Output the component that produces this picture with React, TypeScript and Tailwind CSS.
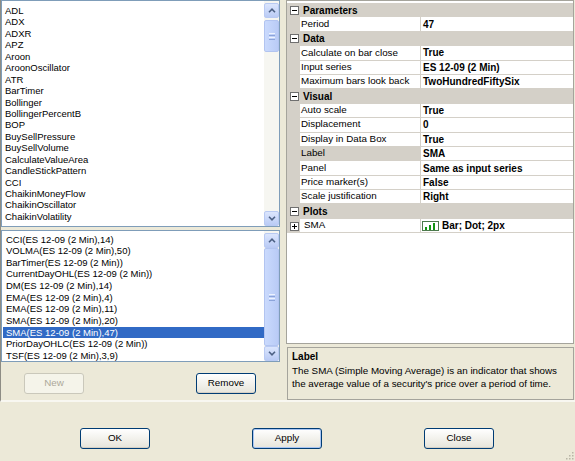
import React from "react";

/**
 * Indicators dialog (XP-style). Left: available + applied indicator lists.
 * Right: property grid with description panel. Bottom: OK / Apply / Close.
 */

const available = [
  "ADL",
  "ADX",
  "ADXR",
  "APZ",
  "Aroon",
  "AroonOscillator",
  "ATR",
  "BarTimer",
  "Bollinger",
  "BollingerPercentB",
  "BOP",
  "BuySellPressure",
  "BuySellVolume",
  "CalculateValueArea",
  "CandleStickPattern",
  "CCI",
  "ChaikinMoneyFlow",
  "ChaikinOscillator",
  "ChaikinVolatility",
];

const applied = [
  "CCI(ES 12-09 (2 Min),14)",
  "VOLMA(ES 12-09 (2 Min),50)",
  "BarTimer(ES 12-09 (2 Min))",
  "CurrentDayOHL(ES 12-09 (2 Min))",
  "DM(ES 12-09 (2 Min),14)",
  "EMA(ES 12-09 (2 Min),4)",
  "EMA(ES 12-09 (2 Min),11)",
  "SMA(ES 12-09 (2 Min),20)",
  "SMA(ES 12-09 (2 Min),47)",
  "PriorDayOHLC(ES 12-09 (2 Min))",
  "TSF(ES 12-09 (2 Min),3,9)",
];

type Row =
  | { kind: "cat"; label: string }
  | { kind: "prop"; name: string; value: string; selected?: boolean };

const rows: Row[] = [
  { kind: "cat", label: "Parameters" },
  { kind: "prop", name: "Period", value: "47" },
  { kind: "cat", label: "Data" },
  { kind: "prop", name: "Calculate on bar close", value: "True" },
  { kind: "prop", name: "Input series", value: "ES 12-09 (2 Min)" },
  { kind: "prop", name: "Maximum bars look back", value: "TwoHundredFiftySix" },
  { kind: "cat", label: "Visual" },
  { kind: "prop", name: "Auto scale", value: "True" },
  { kind: "prop", name: "Displacement", value: "0" },
  { kind: "prop", name: "Display in Data Box", value: "True" },
  { kind: "prop", name: "Label", value: "SMA", selected: true },
  { kind: "prop", name: "Panel", value: "Same as input series" },
  { kind: "prop", name: "Price marker(s)", value: "False" },
  { kind: "prop", name: "Scale justification", value: "Right" },
  { kind: "cat", label: "Plots" },
];

function Arrow({ up }: { up?: boolean }) {
  return (
    <svg width="8" height="5" viewBox="0 0 8 5">
      <path
        d={up ? "M1 4.2 L4 1.2 L7 4.2" : "M1 0.8 L4 3.8 L7 0.8"}
        fill="none"
        stroke="#4D6185"
        strokeWidth="1.6"
      />
    </svg>
  );
}

function ScrollButton({ up }: { up?: boolean }) {
  return (
    <div className="flex h-[15px] w-[15px] shrink-0 items-center justify-center rounded-[2px] border border-[#B9CAF3] bg-linear-to-b from-[#DCE6FD] to-[#BACBF5]">
      <Arrow up={up} />
    </div>
  );
}

function Thumb({ className }: { className: string }) {
  return (
    <div
      className={`flex w-[15px] flex-col items-center justify-center gap-[1px] rounded-[2px] border border-[#B2C4F0] bg-linear-to-r from-[#CADAFD] to-[#B9CBF6] ${className}`}
    >
      <div className="h-[1px] w-[6px] bg-[#EEF3FE]" />
      <div className="h-[1px] w-[6px] bg-[#8CA4DA]" />
      <div className="h-[1px] w-[6px] bg-[#EEF3FE]" />
      <div className="h-[1px] w-[6px] bg-[#8CA4DA]" />
    </div>
  );
}

function Box({ plus }: { plus?: boolean }) {
  return (
    <svg width="9" height="9" viewBox="0 0 9 9">
      <rect x="0.5" y="0.5" width="8" height="8" fill="white" stroke="#6F6F6F" />
      <path d="M2 4.5 H7" stroke="black" />
      {plus && <path d="M4.5 2 V7" stroke="black" />}
    </svg>
  );
}

function PlotIcon() {
  return (
    <svg width="17" height="10" viewBox="0 0 17 10">
      <rect x="0.5" y="0.5" width="16" height="9" fill="white" stroke="#4C7A4C" />
      <rect x="3" y="6" width="2" height="3" fill="#129412" />
      <rect x="7" y="4" width="2" height="5" fill="#129412" />
      <rect x="11" y="2" width="2" height="7" fill="#129412" />
    </svg>
  );
}

function XpButton({
  label,
  w,
  disabled,
  focused,
}: {
  label: string;
  w: string;
  disabled?: boolean;
  focused?: boolean;
}) {
  if (disabled) {
    return (
      <div
        className={`flex h-[21px] ${w} items-center justify-center rounded-[3px] border border-[#CAC8BB] bg-[#F5F4EA] text-[9.8px] text-[#ACA899]`}
      >
        {label}
      </div>
    );
  }
  return (
    <div
      className={`flex h-[21px] ${w} items-center justify-center rounded-[3px] border border-[#003C74] bg-linear-to-b from-white to-[#E6E4DA] text-[9.8px] ${
        focused ? "shadow-[inset_0_0_0_1px_#A9C5F2]" : "shadow-[inset_0_-1px_0_#D6D0C5]"
      }`}
    >
      {label}
    </div>
  );
}

export default function App() {
  return (
    <div className="flex h-[461px] w-[575px] flex-col overflow-hidden bg-[#ECE9D8] font-['Liberation_Sans',Arial,sans-serif] text-black">
      {/* Upper split area */}
      <div className="flex h-[402px] border-b-2 border-l border-b-[#F8F7F1] border-l-[#8D8C84]">
        {/* Left column */}
        <div className="flex w-[279px] flex-col">
          {/* Available indicators */}
          <div className="flex h-[227px] border border-[#7F9DB9] bg-white">
            <div className="flex-1 pl-[3px] pt-[4px] text-[9.5px]">
              {available.map((name) => (
                <div key={name} className="h-[11.45px] leading-[11.45px]">
                  {name}
                </div>
              ))}
            </div>
            <div className="flex w-[15px] flex-col bg-[#F6F6F1] pt-[2px]">
              <ScrollButton up />
              <Thumb className="mt-[2px] h-[32px]" />
              <div className="flex-1" />
              <ScrollButton />
            </div>
          </div>

          {/* Applied indicators */}
          <div className="mt-[3px] flex h-[132px] border border-[#7F9DB9] bg-white">
            <div className="flex-1 pl-[1px] pt-[2.5px] text-[9.5px]">
              {applied.map((name, i) => (
                <div
                  key={name}
                  className={
                    i === 8
                      ? "h-[11.65px] bg-[#316AC5] pl-[3px] leading-[11.65px] text-white"
                      : "h-[11.65px] pl-[3px] leading-[11.65px]"
                  }
                >
                  {name}
                </div>
              ))}
            </div>
            <div className="flex w-[15px] flex-col bg-[#F6F6F1] pt-[2px]">
              <ScrollButton up />
              <Thumb className="flex-1" />
              <ScrollButton />
            </div>
          </div>

          <div className="mt-[11px] flex gap-[112px] pl-[23px]">
            <XpButton label="New" w="w-[60px]" disabled />
            <XpButton label="Remove" w="w-[60px]" />
          </div>
        </div>

        {/* Splitter */}
        <div className="w-[6px]" />

        {/* Right column */}
        <div className="flex flex-1 flex-col pr-[1px]">
          <div className="h-[344px] border border-[#A5A49C] bg-white pt-[2px]">
            {rows.map((r) =>
              r.kind === "cat" ? (
                <div key={r.label} className="flex h-[14.4px] items-center bg-[#D4D0C8]">
                  <div className="flex w-[14px] justify-center">
                    <Box />
                  </div>
                  <span className="pl-[2px] text-[10px] font-bold">{r.label}</span>
                </div>
              ) : (
                <div key={r.name} className="flex h-[14.4px]">
                  <div className="w-[13px] bg-[#D4D0C8]" />
                  <div
                    className={
                      r.selected
                        ? "flex w-[121px] items-center border-r border-b border-[#D4D0C8] bg-[#D4D0C8] pl-[1px] text-[9.8px]"
                        : "flex w-[121px] items-center border-r border-b border-[#D4D0C8] pl-[1px] text-[9.8px]"
                    }
                  >
                    {r.name}
                  </div>
                  <div className="flex flex-1 items-center border-b border-[#D4D0C8] pl-[2px] text-[10px] font-bold">
                    {r.value}
                  </div>
                </div>
              )
            )}
            {/* Plot row */}
            <div className="flex h-[14.4px]">
              <div className="flex w-[13px] items-center justify-center bg-[#D4D0C8] pl-[1px]">
                <Box plus />
              </div>
              <div className="flex w-[121px] items-center border-r border-b border-[#D4D0C8] pl-[4px] text-[9.8px]">
                SMA
              </div>
              <div className="flex flex-1 items-center gap-[3px] border-b border-[#D4D0C8] pl-[1px] text-[10px] font-bold">
                <PlotIcon />
                <span>Bar; Dot; 2px</span>
              </div>
            </div>
          </div>

          {/* Description */}
          <div className="mt-[3px] ml-[1px] h-[53px] border border-[#A5A49C] bg-[#ECE9D8] px-[4px] pt-[2px]">
            <div className="text-[10px] leading-[13.5px] font-bold">Label</div>
            <div className="text-[9.8px] leading-[13.5px]">
              The SMA (Simple Moving Average) is an indicator that shows
              <br />
              the average value of a security&apos;s price over a period of time.
            </div>
          </div>
        </div>
      </div>

      {/* Dialog buttons */}
      <div className="flex flex-1 pl-[80px] pt-[26px]">
        <div className="flex h-[21px] gap-[102px]">
          <XpButton label="OK" w="w-[70px]" />
          <XpButton label="Apply" w="w-[70px]" focused />
          <XpButton label="Close" w="w-[70px]" />
        </div>
        <div className="ml-auto self-end pr-[1px] pb-[1px]">
          <svg width="10" height="10" viewBox="0 0 10 10">
            {[
              [8, 2],
              [5, 5],
              [8, 5],
              [2, 8],
              [5, 8],
              [8, 8],
            ].map(([x, y]) => (
              <rect key={`${x}-${y}`} x={x} y={y} width="1.5" height="1.5" fill="#B9B6A6" />
            ))}
          </svg>
        </div>
      </div>
    </div>
  );
}
